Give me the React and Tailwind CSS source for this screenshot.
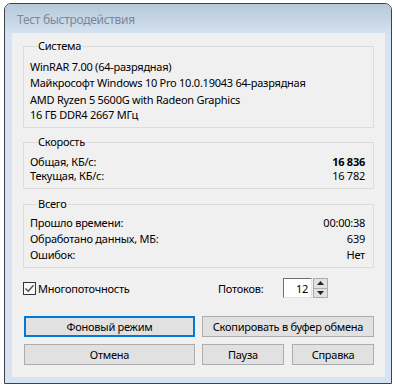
import React from "react";

function Group({ title, className = "", children }) {
  return (
    <fieldset className={"border border-[#dcdcdc] mx-[11px] pl-[6px] pr-[8px] " + className}>
      <legend className="ml-[7px] px-[1px] h-[14px] leading-[14px] text-[11px] text-black">{title}</legend>
      {children}
    </fieldset>
  );
}

function Row({ label, value, h = "h-[16px]", bold = false }) {
  return (
    <div className={"flex items-center justify-between leading-none text-[11px] text-black " + h}>
      <span>{label}</span>
      <span className={bold ? "font-bold" : ""}>{value}</span>
    </div>
  );
}

function Btn({ children, className = "", primary = false }) {
  return (
    <div
      className={
        "h-[21px] flex items-center justify-center text-[11px] leading-none text-black bg-[#e1e1e1] whitespace-nowrap " +
        (primary ? "border-2 border-[#0078d7] " : "border border-[#adadad] ") +
        className
      }
    >
      {children}
    </div>
  );
}

export default function App() {
  return (
    <div className="w-[395px] h-[388px] bg-white overflow-hidden font-['Noto_Sans',sans-serif] tracking-[-0.25px]">
      <div className="ml-[4px] mt-[3px] w-[388px] h-[381px] border border-[#3f4348] rounded-t-[7px] bg-[#d5e3f2] flex flex-col pl-[7px] pr-[6px] pb-[6px]">
        <div className="h-[29px] -ml-[7px] -mr-[6px] rounded-t-[6px] bg-gradient-to-b from-[#b6c8da] to-[#d4e2f0] flex items-center pl-[12px] pt-[3px]">
          <span className="text-[12px] text-[#7d8894] leading-none tracking-[-0.3px]">Тест быстродействия</span>
        </div>
        <div className="flex-1 bg-[#f0f0f0] flex flex-col pt-[6px]">
          <Group title="Система">
            <div className="mt-[5px] pb-[6px]">
              <Row label="WinRAR 7.00 (64-разрядная)" h="h-[16px]" />
              <Row label="Майкрософт Windows 10 Pro 10.0.19043 64-разрядная" h="h-[17px]" />
              <Row label="AMD Ryzen 5 5600G with Radeon Graphics" h="h-[16px]" />
              <Row label="16 ГБ DDR4 2667 МГц" h="h-[14px]" />
            </div>
          </Group>
          <Group title="Скорость" className="mt-[7px]">
            <div className="mt-[5px] pb-[6px]">
              <Row label="Общая, КБ/с:" value="16 836" bold h="h-[14px]" />
              <Row label="Текущая, КБ/с:" value="16 782" h="h-[14px]" />
            </div>
          </Group>
          <Group title="Всего" className="mt-[8px]">
            <div className="mt-[3px] pb-[5px]">
              <Row label="Прошло времени:" value="00:00:38" />
              <Row label="Обработано данных, МБ:" value="639" />
              <Row label="Ошибок:" value="Нет" />
            </div>
          </Group>

          <div className="mt-[10px] h-[20px] flex items-center pl-[11px]">
            <div className="w-[13px] h-[13px] border border-[#333] bg-[#f7f7f7] flex items-center justify-center">
              <svg width="11" height="11" viewBox="0 0 11 11">
                <path d="M1.5 5.5 L4.2 8.2 L9.5 2.2" fill="none" stroke="#505050" strokeWidth="1.4" />
              </svg>
            </div>
            <span className="ml-[2px] w-[180px] text-[11px] text-black leading-none">Многопоточность</span>
            <span className="text-[11px] text-black leading-none w-[65px]">Потоков:</span>
            <div className="w-[29px] h-[20px] bg-white border-t border-l border-t-[#6d6d6d] border-l-[#6d6d6d] border-b border-r border-b-[#e3e3e3] border-r-[#e3e3e3] flex items-center justify-end pr-[3px] text-[11px] text-black leading-none">
              12
            </div>
            <div className="ml-[1px] w-[15px] h-[20px] flex flex-col border border-[#adadad] bg-[#e1e1e1]">
              <div className="flex-1 flex items-center justify-center border-b border-[#adadad]">
                <svg width="7" height="4" viewBox="0 0 7 4"><path d="M3.5 0 L7 4 L0 4 Z" fill="#222" /></svg>
              </div>
              <div className="flex-1 flex items-center justify-center">
                <svg width="7" height="4" viewBox="0 0 7 4"><path d="M0 0 L7 0 L3.5 4 Z" fill="#222" /></svg>
              </div>
            </div>
          </div>

          <div className="mt-[18px] flex pl-[12px] gap-[7px]">
            <Btn primary className="w-[171px]">Фоновый режим</Btn>
            <Btn className="w-[172px]">Скопировать в буфер обмена</Btn>
          </div>
          <div className="mt-[7px] flex pl-[12px]">
            <Btn className="w-[171px]">Отмена</Btn>
            <Btn className="w-[82px] ml-[7px]">Пауза</Btn>
            <Btn className="w-[82px] ml-[8px]">Справка</Btn>
          </div>
        </div>
      </div>
    </div>
  );
}
